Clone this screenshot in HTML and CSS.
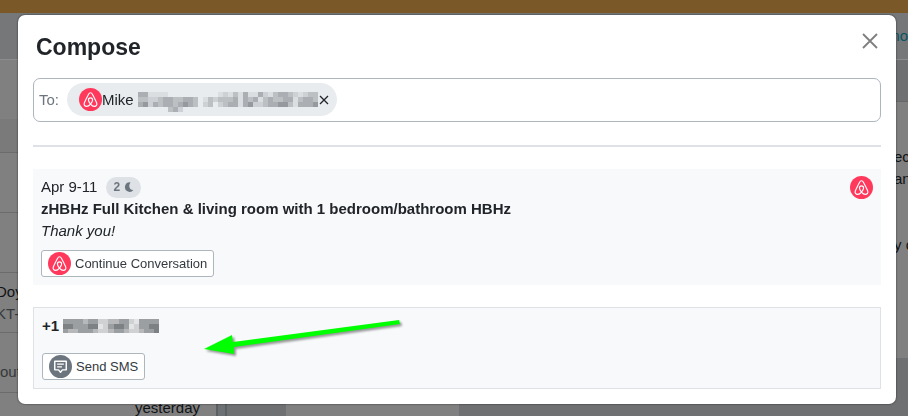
FILE: index.html
```html
<!DOCTYPE html>
<html lang="en">
<head>
  <meta charset="UTF-8">
  <meta name="viewport" content="width=device-width, initial-scale=1.0">
  <title>Compose</title>
  <link rel="stylesheet" href="styles.css">
</head>
<body>
  <svg class="sprite" aria-hidden="true">
    <symbol id="airbnb" viewBox="0 0 24 24">
      <circle cx="12" cy="12" r="12" fill="#ff385c"/>
      <path fill="none" stroke="#fff" stroke-width="1.2" stroke-linejoin="round" d="M12 5c-1 0-1.500.6-2 1.500C8.400 9.500 6.900 12.400 5.600 15.300c-.9 2.200.5 3.900 2.400 3.900 1.500 0 2.900-1.100 4-2.400 1.200-1.400 2.200-2.900 2.200-4.200 0-1.400-.9-2.300-2.200-2.300s-2.200.9-2.200 2.300c0 1.300 1 2.800 2.200 4.200 1.100 1.300 2.500 2.400 4 2.400 1.900 0 3.300-1.700 2.400-3.900-1.300-2.900-2.800-5.800-4.400-8.800-.5-.9-1-1.500-2-1.500z"/>
    </symbol>
    <symbol id="sms" viewBox="0 0 24 24">
      <circle cx="12" cy="12" r="12" fill="#6c757d"/>
      <path fill="none" stroke="#fff" stroke-width="1.5" stroke-linejoin="round" d="M6 6.5h12v9h-4l-2 2.500-2-2.500H6z"/>
      <path stroke="#fff" stroke-width="1.3" d="M8.500 9.500h7M8.500 12.300h5"/>
    </symbol>
  </svg>

  <div class="app">
    <div class="topbar"></div>
    <nav class="navbar"><a href="#">mo</a></nav>
    <div class="columns">
      <aside class="inbox">
        <div class="inbox-head"></div>
        <div class="inbox-filter"></div>
        <div class="inbox-row"></div>
        <div class="inbox-row"></div>
        <div class="inbox-row guest"><span>Doy</span><span class="muted">KT-</span></div>
        <div class="inbox-row preview"><span class="muted">out</span></div>
        <div class="inbox-row date"><span>yesterday</span></div>
      </aside>
      <div class="splitter"></div>
      <main class="thread">
        <div class="message received"><p>ec<br>an</p><p>y c</p></div>
        <div class="message sent"></div>
      </main>
    </div>
  </div>

  <div class="backdrop">
    <div class="modal" role="dialog" aria-labelledby="modal-title">
      <div class="modal-header">
        <h1 id="modal-title">Compose</h1>
        <button class="close" type="button" aria-label="Close">
          <svg width="16" height="16" viewBox="0 0 16 16"><path stroke="#7f7f7f" stroke-width="1.8" d="M1 1l14 14M15 1L1 15"/></svg>
        </button>
      </div>

      <div class="recipients">
        <label for="to">To:</label>
        <span class="chip">
          <svg class="icon"><use href="#airbnb"/></svg>
          <span>Mike</span>
          <svg class="mosaic" width="180" height="20" data-rows="441111000000000012131411421344321233|332234433443013233341434134334413443|452434434543023023441452234455314445|000000342000000000000000000000000000"></svg>
          <button class="remove" type="button" aria-label="Remove Mike">
            <svg width="10" height="10" viewBox="0 0 10 10"><path stroke="#212529" stroke-width="1.3" d="M1 1l8 8M9 1L1 9"/></svg>
          </button>
        </span>
        <input type="text" id="to">
      </div>

      <hr>

      <section class="card">
        <div class="card-top">
          <span class="dates">Apr 9-11</span>
          <span class="nights">2
            <svg width="10" height="10" viewBox="0 0 10 10"><path fill="#6c757d" d="M6.5.4A4.7 4.7 0 1 0 9.4 7.9C6.2 8.2 3.6 4.400 6.500.4z"/></svg>
          </span>
          <svg class="icon channel"><use href="#airbnb"/></svg>
        </div>
        <h2>zHBHz Full Kitchen &amp; living room with 1 bedroom/bathroom HBHz</h2>
        <p class="last-message">Thank you!</p>
        <button class="action" type="button"><svg class="icon"><use href="#airbnb"/></svg>Continue Conversation</button>
      </section>

      <section class="card outlined">
        <h2>+1 <svg class="mosaic dark" width="96" height="14" data-rows="4444344223344214444|5544455124554124455|4334443223443223445"></svg></h2>
        <button class="action" type="button"><svg class="icon"><use href="#sms"/></svg>Send SMS</button>
        <svg class="arrow" width="204" height="50" viewBox="0 0 204 50"><path fill="#0f0" d="M4 37L32 23L33 30L199 8L200 12L34 35L34 42z"/></svg>
      </section>
    </div>
  </div>

  <script>
    // Each digit is one block of the mosaic, 0 is empty and 5 the darkest
    document.querySelectorAll('.mosaic').forEach(function(svg) {
      const rows = svg.dataset.rows.split('|');
      const height = Math.ceil(svg.getAttribute('height') / rows.length);
      const width = svg.getAttribute('width') / rows[0].length;
      rows.forEach(function(row, y) {
        [...row].forEach(function(level, x) {
          const rect = document.createElementNS('http://www.w3.org/2000/svg', 'rect');
          rect.setAttribute('x', Math.round(x * width));
          rect.setAttribute('y', y * height);
          rect.setAttribute('width', Math.round((x + 1) * width) - Math.round(x * width));
          rect.setAttribute('height', height);
          rect.setAttribute('class', 'level-' + level);
          svg.appendChild(rect);
        });
      });
    });
  </script>
</body>
</html>
```

FILE: styles.css
```css
* {
  box-sizing: border-box;
}

body {
  margin: 0;
  font-family: "Liberation Sans", Arial, sans-serif;
  font-size: 15px;
  line-height: 22px;
  color: #212529;
}

h1,
h2,
p {
  margin: 0;
}

button {
  font-family: inherit;
  cursor: pointer;
}

.sprite {
  position: absolute;
  width: 0;
  height: 0;
}

.icon {
  width: 23px;
  height: 23px;
  flex: none;
}

/* Page behind the dialog */
.app {
  display: flex;
  flex-direction: column;
  height: 100vh;
  overflow: hidden;
  background-color: #808080;
  color: #111315;
}

.topbar {
  height: 13px;
  flex: none;
  background-color: #7b5828;
}

.navbar {
  display: flex;
  justify-content: flex-end;
  align-items: center;
  height: 47px;
  flex: none;
  background-color: #757779;
  border-bottom: 1px solid #8b8d8f;
}

.navbar a {
  color: #0b5563;
  text-decoration: none;
}

.columns {
  display: flex;
  flex: 1;
  min-height: 0;
}

.inbox {
  width: 216px;
  flex: none;
  overflow: hidden;
}

.inbox-head {
  height: 59px;
}

.inbox-filter {
  height: 34px;
  background-color: #7a7a7a;
  border-bottom: 1px solid #6c6c6c;
}

.inbox-row {
  display: flex;
  flex-direction: column;
  height: 60px;
  padding-top: 8px;
  border-bottom: 1px solid #6c6c6c;
}

.inbox-row.guest {
  margin-left: -4px;
}

.inbox-row.preview {
  padding-top: 28px;
}

.inbox-row.date {
  align-items: flex-end;
  padding-right: 16px;
  padding-top: 4px;
}

.muted {
  color: #36393c;
}

.splitter {
  width: 11px;
  flex: none;
  background-color: #6d7174;
  border: solid #5a6064;
  border-width: 0 2px;
}

.thread {
  display: flex;
  flex-direction: column;
  flex: 1;
  padding-top: 41px;
  background-color: #6f7072;
}

.message {
  background-color: #808080;
}

.message.received {
  align-self: flex-end;
  width: 14px;
  height: 257px;
  padding-top: 44px;
  border-top: 1px solid #666768;
  white-space: nowrap;
}

.message.received p + p {
  margin-top: 44px;
}

.message.sent {
  width: 173px;
  flex: 1;
  margin-left: 59px;
}

/* Dialog */
.backdrop {
  position: fixed;
  inset: 0;
  padding: 15px 12px 12px 18px;
}

.modal {
  padding: 15px;
  background-color: #fff;
  border-radius: 7px;
  box-shadow: 0 0 2px rgba(0, 0, 0, 0.7);
}

.modal-header {
  display: flex;
  justify-content: space-between;
  align-items: center;
  height: 34px;
  margin-bottom: 14px;
  padding: 0 3px;
}

.modal-header h1 {
  font-size: 23px;
  line-height: 34px;
}

.close,
.remove {
  display: flex;
  padding: 0;
  border: none;
  background: none;
}

.close {
  align-self: flex-start;
  padding-top: 3px;
}

.recipients {
  display: flex;
  align-items: center;
  height: 44px;
  padding: 0 5px 1px;
  border: 1px solid #adb5bd;
  border-radius: 7px;
}

.recipients label {
  color: #6c757d;
}

.recipients input {
  flex: 1;
  min-width: 0;
  border: none;
  outline: none;
  background: none;
  font: inherit;
}

.chip {
  display: flex;
  align-items: center;
  height: 33px;
  margin-left: 8px;
  padding: 0 8px 0 12px;
  border-radius: 17px;
  background-color: #e9ecef;
}

.chip .mosaic {
  margin: 4px 1px 0 4px;
}

.mosaic {
  fill: #5f6468;
}

.mosaic.dark {
  fill: #2d3035;
  vertical-align: -2px;
}

.level-0 {
  opacity: 0;
}

.level-1 {
  opacity: 0.1;
}

.level-2 {
  opacity: 0.2;
}

.level-3 {
  opacity: 0.32;
}

.level-4 {
  opacity: 0.45;
}

.level-5 {
  opacity: 0.6;
}

hr {
  height: 2px;
  margin: 23px 0 22px;
  border: none;
  background-color: #dee2e6;
}

.card {
  padding: 7px 8px 8px;
  background-color: #f8f9fa;
}

.card h2 {
  font-size: 15px;
  line-height: 22px;
}

.card.outlined {
  position: relative;
  margin-top: 22px;
  border: 1px solid #dee2e6;
}

.card.outlined .action {
  margin-top: 16px;
}

.card-top {
  display: flex;
  align-items: center;
  height: 22px;
}

.nights {
  display: flex;
  align-items: center;
  gap: 4px;
  height: 21px;
  margin-left: 9px;
  padding: 0 7px;
  border-radius: 11px;
  background-color: #dee2e6;
  color: #6c757d;
  font-size: 12px;
  font-weight: bold;
}

.channel {
  margin-left: auto;
}

.last-message {
  font-style: italic;
}

.action {
  display: flex;
  align-items: center;
  gap: 4px;
  height: 27px;
  margin-top: 8px;
  padding: 0 6px;
  border: 1px solid #adb5bd;
  border-radius: 3px;
  background-color: #fff;
  color: #343a40;
  font-size: 13px;
}

/* Pointer drawn over the card */
.arrow {
  position: absolute;
  left: 166px;
  top: 4px;
  filter: drop-shadow(2px 2px 1px rgba(0, 0, 0, 0.4));
}
```
